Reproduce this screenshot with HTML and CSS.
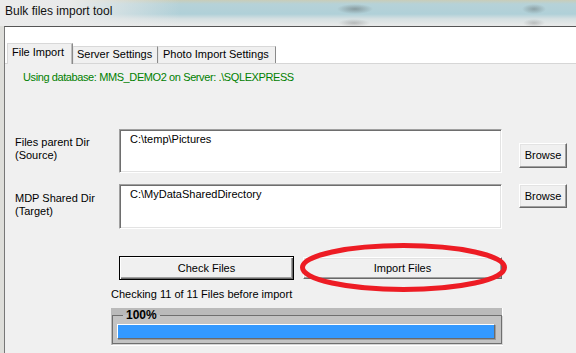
FILE: index.html
```html
<!DOCTYPE html>
<html>
<head>
<meta charset="utf-8">
<title>Bulk files import tool</title>
<link rel="stylesheet" href="styles.css">
</head>
<body>
<div class="titlebar"><span class="title">Bulk files import tool</span></div>
<div class="window">
  <div class="tabstrip">
    <div class="tab active">File Import</div>
    <div class="tab server">Server Settings</div>
    <div class="tab photo">Photo Import Settings</div>
  </div>
  <div class="page">
    <p class="status">Using database: MMS_DEMO2 on Server: .\SQLEXPRESS</p>
    <div class="row row1">
      <div class="label">Files parent Dir<br>(Source)</div>
      <div class="textbox">C:\temp\Pictures</div>
      <button class="btn browse">Browse</button>
    </div>
    <div class="row row2">
      <div class="label">MDP Shared Dir<br>(Target)</div>
      <div class="textbox">C:\MyDataSharedDirectory</div>
      <button class="btn browse">Browse</button>
    </div>
    <div class="actions">
      <button class="btn default check">Check Files</button>
      <div class="import-wrap">
        <button class="btn import">Import Files</button>
        <svg class="highlight" width="207" height="49" viewBox="0 0 207 49"><ellipse cx="103.5" cy="24.5" rx="101" ry="22" fill="none" stroke="#ed1c24" stroke-width="5"/></svg>
      </div>
    </div>
    <div class="progress-text">Checking 11 of 11 Files before import</div>
    <div class="progress-box">
      <fieldset class="progress-frame">
        <legend>100%</legend>
        <div class="bar"></div>
      </fieldset>
    </div>
  </div>
</div>
</body>
</html>
```
FILE: styles.css
```css
html, body {
  margin: 0;
  height: 100%;
}
body {
  background: #dededa;
  font-family: "Liberation Sans", Arial, sans-serif;
  font-size: 11px;
  color: #000;
  overflow: hidden;
}
.titlebar {
  height: 26px;
  box-sizing: border-box;
  padding: 4px 0 0 5px;
  line-height: 15px;
  font-size: 12px;
  color: #111;
  background:
    radial-gradient(ellipse 18px 5px at 355px 9px, rgba(70,75,75,.4), rgba(70,75,75,0)),
    radial-gradient(ellipse 16px 4px at 354px 23px, rgba(80,80,80,.3), rgba(80,80,80,0)),
    radial-gradient(ellipse 12px 5px at 534px 9px, rgba(70,75,75,.35), rgba(70,75,75,0)),
    radial-gradient(ellipse 11px 4px at 534px 23px, rgba(80,80,80,.28), rgba(80,80,80,0)),
    linear-gradient(90deg, #ebebeb 0, #e9eaea 70px, rgba(233,234,234,0) 180px),
    linear-gradient(180deg, #c9cdb9 0, #b6d2d8 4px, #b0d0d8 14px, #d6e0e2 19px, #e7e9e9 25px);
}
.window {
  margin-left: 4px;
  border-left: 1px solid #777;
  border-top: 1px solid #555;
  height: 326px;
  display: flex;
  flex-direction: column;
  background: #f0f0f0;
}
.tabstrip {
  height: 36px;
  background: #fff;
  border-bottom: 1px solid #d6d6d6;
  display: flex;
  align-items: flex-end;
  padding-left: 2px;
}
.tab {
  box-sizing: border-box;
  height: 17px;
  background: #f0f0f0;
  border-top: 1px solid #d8d8d8;
  border-left: 1px solid #e6e6e6;
  border-right: 1px solid #8a8a8a;
  line-height: 15px;
  padding-left: 3px;
  white-space: nowrap;
}
.tab.active {
  width: 66px;
  height: 21px;
  margin-bottom: -1px;
  padding: 1px 0 0 4px;
  border-left-color: #d8d8d8;
  box-shadow: inset -1px 0 #bdbdbd;
}
.tab.server { width: 85px; }
.tab.photo { width: 118px; padding-left: 4px; }
.page {
  flex: 1;
  padding-left: 10px;
  background: #f0f0f0;
}
.status {
  margin: 0;
  padding: 7px 0 0 8px;
  line-height: 13px;
  color: #008000;
  letter-spacing: -0.4px;
}
.row {
  display: flex;
  align-items: flex-start;
}
.row1 { margin-top: 45px; }
.row2 { margin-top: 11px; }
.label {
  width: 104px;
  line-height: 13px;
  margin-top: 7px;
}
.row2 .label { margin-top: 8px; }
.textbox {
  box-sizing: border-box;
  width: 383px;
  height: 44px;
  background: #fff;
  border: 1px solid;
  border-color: #a0a0a0 #fff #fff #a0a0a0;
  box-shadow: inset 1px 1px #6e6e6e, inset -1px -1px #e3e3e3;
  padding: 3px 0 0 10px;
  line-height: 13px;
}
.row2 .textbox { height: 45px; }
.btn {
  box-sizing: border-box;
  font: inherit;
  color: #000;
  background: #f0f0f0;
  border: 1px solid;
  border-color: #fff #696969 #696969 #fff;
  box-shadow: inset -1px -1px #a0a0a0, inset 1px 1px #e3e3e3;
  padding: 0;
  margin: 0;
  line-height: 13px;
}
.browse {
  width: 48px;
  height: 25px;
  margin-left: 17px;
  margin-top: 14px;
}
.row2 .browse {
  height: 24px;
  margin-top: 0;
}
.actions {
  margin-top: 27px;
  display: flex;
  align-items: flex-start;
  padding-left: 104px;
}
.check {
  width: 175px;
  height: 24px;
}
.btn.default {
  border: 1px solid #000;
  box-shadow: inset 1px 1px #fff, inset -1px -1px #696969, inset -2px -2px #a0a0a0;
}
.import-wrap {
  position: relative;
  margin-left: 9px;
  margin-top: 1px;
}
.import {
  display: block;
  width: 199px;
  height: 22px;
}
.highlight {
  position: absolute;
  left: -3px;
  top: -14px;
  pointer-events: none;
}
.progress-text {
  margin-top: 8px;
  padding-left: 96px;
  line-height: 13px;
}
.progress-box {
  box-sizing: border-box;
  margin-top: 7px;
  margin-left: 96px;
  width: 392px;
  height: 38px;
  padding: 1px 0 1px 1px;
  background: #bababa;
  border-right: 1px solid #fff;
  border-bottom: 1px solid #fff;
}
.progress-frame {
  margin: 0;
  width: 390px;
  box-sizing: border-box;
  padding: 2px 6px 4px 4px;
  border: 1px solid #6f6f6f;
  box-shadow: 1px 1px 0 #d6d6d6;
  background: #c3c3c3;
  min-inline-size: 0;
}
.progress-frame legend {
  margin-left: 6px;
  padding: 0 3px;
  font-weight: bold;
  font-size: 12px;
  line-height: 13px;
}
.bar {
  box-sizing: border-box;
  height: 15px;
  background: #3399ff;
  border-top: 1px solid #fff;
  border-left: 1px solid #fff;
  border-right: 1px solid #6a6a6a;
  border-bottom: 1px solid #6a6a6a;
  box-shadow: 1px 1px 0 #9a9a9a;
}
```
